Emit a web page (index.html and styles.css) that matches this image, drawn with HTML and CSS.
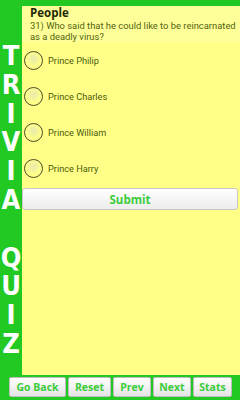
FILE: index.html
```html
<!DOCTYPE html>
<html lang="en">
<head>
    <meta charset="UTF-8">
    <meta name="viewport" content="width=device-width, initial-scale=1.0">
    <title>Trivia Quiz</title>
    <link rel="stylesheet" href="styles.css">
</head>
<body>
    <div class="screen">
        <div class="side">
            <span>T</span><span>R</span><span>I</span><span>V</span><span>I</span><span>A</span>
            <span></span>
            <span>Q</span><span>U</span><span>I</span><span>Z</span>
        </div>
        <div class="panel">
            <div class="question">
                <h1>People</h1>
                <p>31) Who said that he could like to be reincarnated as a deadly virus?</p>
            </div>
            <label class="option"><span class="radio"></span>Prince Philip</label>
            <label class="option"><span class="radio"></span>Prince Charles</label>
            <label class="option"><span class="radio"></span>Prince William</label>
            <label class="option"><span class="radio"></span>Prince Harry</label>
            <button class="submit">Submit</button>
        </div>
    </div>
    <div class="nav">
        <button class="go-back">Go Back</button>
        <button class="reset">Reset</button>
        <button class="prev">Prev</button>
        <button class="next">Next</button>
        <button class="stats">Stats</button>
    </div>
</body>
</html>
```

FILE: styles.css
```css
body {
    margin: 0;
    width: 240px;
    height: 400px;
    background-color: #22c922;
    font-family: Roboto, "Open Sans", sans-serif;
    overflow: hidden;
}
.screen {
    display: grid;
    grid-template-columns: 22px 1fr;
    height: 369px;
    padding-top: 6px;
}
.side {
    display: flex;
    flex-direction: column;
    align-items: center;
    padding-top: 36px;
    color: #ffffff;
    font-family: "DejaVu Sans Condensed", "DejaVu Sans", sans-serif;
    font-weight: bold;
    font-size: 27px;
    line-height: 28.8px;
}
.side span {
    height: 28.8px;
}
.panel {
    background-color: #ffff88;
}
.question {
    padding: 0 0 0 8px;
    background-color: #ffff99;
}
.question h1 {
    margin: 0;
    font-family: "Open Sans", sans-serif;
    font-size: 11.5px;
    line-height: 13px;
    font-weight: bold;
    color: #1f2a05;
}
.question p {
    margin: 1px 0 0;
    font-size: 9.4px;
    line-height: 11px;
    color: #51620f;
}
.option {
    display: flex;
    align-items: center;
    height: 36px;
    padding-left: 2px;
    font-size: 9.2px;
    color: #4b5c0c;
}
.radio {
    width: 17px;
    height: 17px;
    border: 1.2px solid #4a4a2a;
    border-radius: 50%;
    margin-right: 5px;
    background: radial-gradient(circle at 50% 40%, #e8e8b0 0, #ffff88 60%);
}
.submit {
    display: block;
    width: 216px;
    height: 22px;
    margin-top: 2px;
    border: 1px solid #c8c8c8;
    border-radius: 3px;
    background: linear-gradient(#ffffff, #ececec);
    color: #3ccc3c;
    font-family: "Open Sans", sans-serif;
    font-weight: bold;
    font-size: 11.5px;
}
.nav {
    display: flex;
    gap: 2px;
    padding: 2px 0 0 9px;
}
.nav button {
    height: 20px;
    border: 1px solid #bdbdbd;
    border-radius: 2px;
    background: linear-gradient(#ffffff, #e4e4e4);
    color: #3ccc3c;
    font-family: "Open Sans", sans-serif;
    font-weight: bold;
    font-size: 10.5px;
    padding: 0;
}
.go-back { width: 57px; }
.reset { width: 43px; }
.prev { width: 38px; }
.next { width: 38px; }
.stats { width: 39px; }
```
